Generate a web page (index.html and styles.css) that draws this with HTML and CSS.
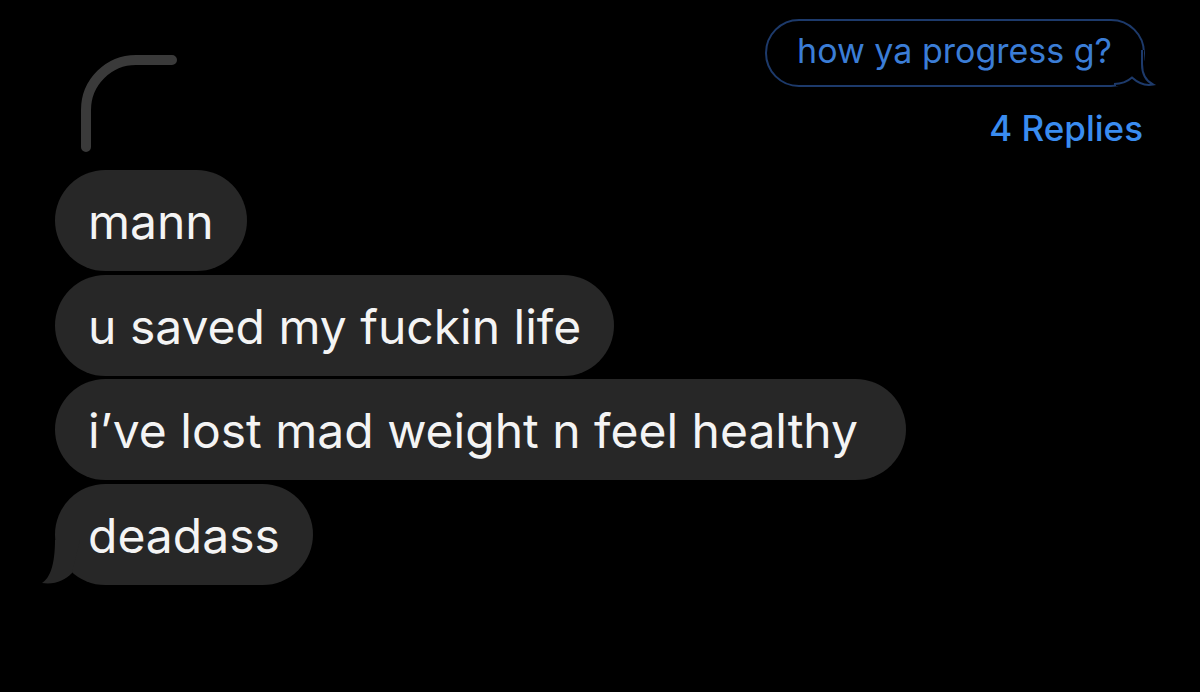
FILE: index.html
```html
<!DOCTYPE html>
<html lang="en">
<head>
<meta charset="utf-8">
<title>Thread</title>
<link rel="stylesheet" href="styles.css">
</head>
<body>
<div class="screen">
  <div class="top">
    <svg class="reply-line" width="106" height="106" viewBox="0 0 106 106">
      <path d="M10 97 V60 A50 50 0 0 1 60 10 H96" fill="none" stroke="#3a3a3a" stroke-width="10" stroke-linecap="round"/>
    </svg>
    <div class="outgoing">
      <div class="out-bubble">
        <span class="out-text">how ya progress g?</span>
        <svg class="out-tail" width="50" height="42" viewBox="0 0 50 42">
          <path d="M36 4 V40 H8 V4 Z" fill="#000"/>
          <path d="M34 4 V18 C34 29 38 35 45 38.5 C37 40 30 37 24 31.5 C19 36 14 38 6 38" fill="none" stroke="#1d3a6b" stroke-width="2"/>
        </svg>
      </div>
      <div class="replies">4 Replies</div>
    </div>
  </div>
  <div class="thread">
    <div class="msg">mann</div>
    <div class="msg">u saved my fuckin life</div>
    <div class="msg msg-wide">i’ve lost mad weight n feel healthy</div>
    <div class="msg msg-last">
      <svg class="in-tail" width="70" height="50" viewBox="0 0 70 50">
        <path d="M15 5 C15 30 10 43 2 48 C15 50 25 45 32 38 L40 5 Z" fill="#272727"/>
      </svg>
      <span class="msg-text">deadass</span>
    </div>
  </div>
</div>
</body>
</html>
```

FILE: styles.css
```css
html, body {
  margin: 0;
  padding: 0;
  background: #000;
}

.screen {
  width: 1200px;
  height: 692px;
  overflow: hidden;
  display: flex;
  flex-direction: column;
  font-family: Inter, "Liberation Sans", sans-serif;
}

.top {
  display: flex;
  justify-content: space-between;
  align-items: flex-start;
  padding: 19px 55px 0 76px;
}

.reply-line {
  display: block;
  margin-top: 31px;
}

.outgoing {
  display: flex;
  flex-direction: column;
  align-items: flex-end;
}

.out-bubble {
  position: relative;
  border: 2px solid #1d3a6b;
  border-radius: 36px;
  padding: 10px 31px 14px 30px;
  font-size: 34px;
  line-height: 40px;
  color: #3b7dd6;
}

.out-tail {
  position: absolute;
  right: -15px;
  bottom: -3px;
  display: block;
}

.replies {
  margin-top: 23px;
  margin-right: 2px;
  font-size: 35px;
  line-height: 36px;
  font-weight: 500;
  color: #3a8cf0;
}

.thread {
  display: flex;
  flex-direction: column;
  align-items: flex-start;
  gap: 3.7px;
  padding-left: 55px;
  margin-top: 14px;
}

.msg {
  position: relative;
  background: #272727;
  border-radius: 51px;
  padding: 24px 33px 21px;
  font-size: 48px;
  line-height: 56px;
  color: #f4f4f4;
}

.msg-wide {
  padding-right: 48px;
}

.msg-text {
  position: relative;
}

.in-tail {
  position: absolute;
  left: -15px;
  bottom: 0;
  display: block;
}
```
